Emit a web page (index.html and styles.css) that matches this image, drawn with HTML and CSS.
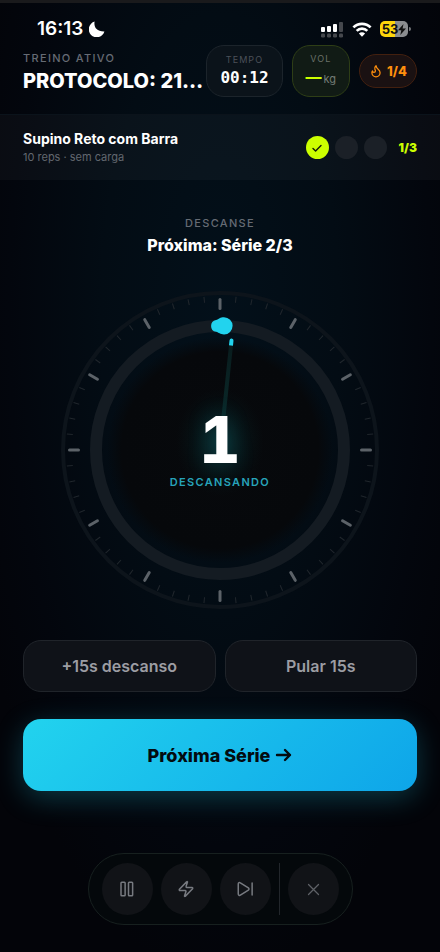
FILE: index.html
```html
<!DOCTYPE html>
<html lang="pt-BR">
<head>
<meta charset="utf-8">
<meta name="viewport" content="width=device-width, initial-scale=1">
<title>Treino ativo</title>
<link rel="stylesheet" href="styles.css">
</head>
<body>
<div class="statusbar">
  <div class="clock">16:13
    <svg width="16" height="16" viewBox="0 0 16 16" aria-hidden="true"><path fill="#fff" d="M5.6.6C4.6 5.8 7.300 10.800 15.400 10.600A8 8 0 1 1 5.600.6Z"/></svg>
  </div>
  <div class="system">
    <svg width="24" height="17" viewBox="0 0 24 17" aria-hidden="true">
      <g fill="#fff"><rect x="1" y="6" width="4" height="5" rx="1"/><rect x="7" y="5" width="4" height="6" rx="1"/><rect x="13" y="3" width="4" height="8" rx="1"/></g>
      <g fill="#45484d"><rect x="19" y="1" width="4" height="10" rx="1"/><rect x="1" y="12.500" width="4" height="4" rx="1.200"/><rect x="7" y="12.500" width="4" height="4" rx="1.200"/><rect x="13" y="12.500" width="4" height="4" rx="1.200"/><rect x="19" y="12.500" width="4" height="4" rx="1.200"/></g>
    </svg>
    <svg width="20" height="15" viewBox="0 0 20 15" aria-hidden="true">
      <g fill="none" stroke="#fff" stroke-width="2.700"><path d="M1.400 5.400a12.200 12.200 0 0 1 17.200 0"/><path d="M4.700 8.900a7.500 7.500 0 0 1 10.600 0"/></g>
      <path fill="#fff" d="M10 14.700 6.900 11.600a4.400 4.400 0 0 1 6.200 0Z"/>
    </svg>
    <div class="battery"><span>53</span>
      <svg width="8" height="11" viewBox="0 0 8 11" aria-hidden="true"><path fill="#111" d="M5.500 0 0 6.300h3.300L2.300 11 8 4.500H4.600Z"/></svg>
    </div>
  </div>
</div>

<header class="header">
  <div class="heading">
    <p class="caption">TREINO ATIVO</p>
    <h1>PROTOCOLO: 21…</h1>
  </div>
  <div class="stats">
    <div class="stat">
      <span class="stat-label">TEMPO</span>
      <span class="time">00:12</span>
    </div>
    <div class="stat stat-volume">
      <span class="stat-label">VOL</span>
      <span class="volume"><b>—</b><small>kg</small></span>
    </div>
    <div class="streak">
      <svg width="14" height="14" viewBox="0 0 24 24" fill="none" stroke="currentColor" stroke-width="2.200" stroke-linecap="round" stroke-linejoin="round" aria-hidden="true"><path d="M8.500 14.500A2.500 2.500 0 0 0 11 12c0-1.380-.5-2-1-3-1.072-2.143-.224-4.054 2-6 .5 2.500 2 4.900 4 6.500 2 1.600 3 3.500 3 5.500a7 7 0 1 1-14 0c0-1.153.433-2.294 1-3a2.500 2.500 0 0 0 2.500 2.500z"/></svg>
      1/4
    </div>
  </div>
</header>

<section class="exercise">
  <div>
    <h2>Supino Reto com Barra</h2>
    <p>10 reps · sem carga</p>
  </div>
  <div class="sets">
    <span class="set set-done"><svg width="12" height="12" viewBox="0 0 12 12" fill="none" stroke="#111c08" stroke-width="1.400" stroke-linecap="round" stroke-linejoin="round" aria-hidden="true"><path d="M2 6.500 4.600 9 10 3.500"/></svg></span>
    <span class="set"></span>
    <span class="set"></span>
    <span class="set-count">1/3</span>
  </div>
</section>

<main class="rest">
  <p class="caption">DESCANSE</p>
  <h2 class="next">Próxima: Série 2/3</h2>

  <div class="timer">
    <svg class="dial" viewBox="0 0 320 320" aria-hidden="true">
      <defs>
        <radialGradient id="core"><stop offset="0" stop-color="#07090c"/><stop offset=".87" stop-color="#06080b"/><stop offset="1" stop-color="#06080b" stop-opacity="0"/></radialGradient>
        <radialGradient id="glow"><stop offset="0" stop-color="#0a3a3c" stop-opacity=".8"/><stop offset=".5" stop-color="#08282a" stop-opacity=".4"/><stop offset="1" stop-color="#06191b" stop-opacity="0"/></radialGradient>
        <linearGradient id="sweep" x1="0" y1="0" x2="0" y2="1"><stop offset="0" stop-color="#091c1d"/><stop offset="1" stop-color="#0a2c2d"/></linearGradient>
        <path id="tick" d="M160 9.500v9"/>
      </defs>
      <circle cx="160" cy="160" r="157" fill="none" stroke="#0d141b" stroke-width="4"/>
      <circle cx="160" cy="160" r="151" fill="none" stroke="#20262c" stroke-width="6" pathLength="360" stroke-dasharray="0 5.800 .4 5.600 .4 5.600 .4 5.600 .4 5.800"/>
      <g stroke="#5c6268" stroke-width="3" stroke-linecap="round">
        <use href="#tick"/><use href="#tick" transform="rotate(30 160 160)"/><use href="#tick" transform="rotate(60 160 160)"/><use href="#tick" transform="rotate(90 160 160)"/><use href="#tick" transform="rotate(120 160 160)"/><use href="#tick" transform="rotate(150 160 160)"/><use href="#tick" transform="rotate(180 160 160)"/><use href="#tick" transform="rotate(210 160 160)"/><use href="#tick" transform="rotate(240 160 160)"/><use href="#tick" transform="rotate(270 160 160)"/><use href="#tick" transform="rotate(300 160 160)"/><use href="#tick" transform="rotate(330 160 160)"/>
      </g>
      <circle cx="160" cy="160" r="124" fill="none" stroke="#141b22" stroke-width="12"/>
      <circle cx="160" cy="160" r="113" fill="url(#core)"/>
      <ellipse cx="160" cy="152" rx="44" ry="54" fill="url(#glow)"/>
      <g transform="rotate(6 160 160)">
        <rect x="158" y="52" width="4" height="98" fill="url(#sweep)"/>
        <path fill="#22d3ee" d="M158 55v-5q0-2 2-2t2 2v5Z"/>
      </g>
      <path fill="#22d3ee" d="M156 30c3-1 4-2.800 8-2.800a8.600 8.600 0 0 1 0 17.200c-4 0-5-1.800-8-2.600a6 6 0 0 1 0-11.800Z"/>
    </svg>
    <div class="readout">
      <strong>1</strong>
      <span>DESCANSANDO</span>
    </div>
  </div>

  <div class="adjust">
    <button type="button">+15s descanso</button>
    <button type="button">Pular 15s</button>
  </div>
  <button class="primary" type="button">Próxima Série
    <svg width="17" height="16" viewBox="0 0 17 16" fill="none" stroke="currentColor" stroke-width="2.400" stroke-linecap="round" stroke-linejoin="round" aria-hidden="true"><path d="M2 8h13M10 3l5 5-5 5"/></svg>
  </button>
</main>

<nav class="dock" aria-label="Controles">
  <button type="button" aria-label="Pausar"><svg viewBox="0 0 24 24" aria-hidden="true"><rect x="4" y="3" width="5.500" height="18" rx="1"/><rect x="14" y="3" width="5.500" height="18" rx="1"/></svg></button>
  <button type="button" aria-label="Ação rápida"><svg viewBox="0 0 24 24" aria-hidden="true"><path d="M4 14a1 1 0 0 1-.78-1.630l9.900-10.200a.5.5 0 0 1 .86.460l-1.920 6.020A1 1 0 0 0 13 10h7a1 1 0 0 1 .78 1.630l-9.900 10.200a.5.5 0 0 1-.86-.460l1.920-6.020A1 1 0 0 0 11 14z"/></svg></button>
  <button type="button" aria-label="Avançar"><svg viewBox="0 0 24 24" aria-hidden="true"><path d="M3 5.200v13.600a1.800 1.800 0 0 0 2.800 1.500l10.700-6.800a1.800 1.800 0 0 0 0-3L5.800 3.700A1.800 1.800 0 0 0 3 5.200ZM21.500 4v16"/></svg></button>
  <span class="divider"></span>
  <button class="close" type="button" aria-label="Fechar"><svg viewBox="0 0 24 24" aria-hidden="true"><path d="M4 4 20 20M20 4 4 20"/></svg></button>
</nav>
</body>
</html>
```
FILE: styles.css
```css
* { box-sizing: border-box; }

body {
  margin: 0;
  min-height: 100vh;
  border-top: 3px solid #1a1a1c;
  background: radial-gradient(ellipse 60% 70% at 50% 33%, #03101a 0%, #030c14 45%, #03060d 80%, #030409 100%);
  color: #fff;
  font-family: Inter, "Liberation Sans", sans-serif;
}

h1, h2, p { margin: 0; }

button {
  font: inherit;
  cursor: pointer;
}

.statusbar {
  display: flex;
  justify-content: space-between;
  align-items: center;
  padding: 16px 29px 0 37px;
}

.clock {
  display: flex;
  align-items: center;
  gap: 6px;
  font-size: 19px;
  line-height: 20px;
  font-weight: 600;
}

.system {
  display: flex;
  align-items: center;
  gap: 8px;
}

.battery {
  position: relative;
  display: flex;
  align-items: center;
  justify-content: center;
  width: 28px;
  height: 16px;
  margin-right: 3px;
  border-radius: 5px;
  background: linear-gradient(90deg, #fdd60b 53%, #8b8d90 53%);
  color: #111;
  font-size: 13px;
  font-weight: 700;
}

.battery::after {
  content: "";
  position: absolute;
  left: 29px;
  top: 6px;
  width: 2px;
  height: 4px;
  border-radius: 0 2px 2px 0;
  background: #77797c;
}

.header {
  display: flex;
  align-items: center;
  gap: 3px;
  padding: 6px 23px 17px;
}

.heading {
  flex: 1;
  min-width: 0;
  padding-top: 2px;
}

.caption {
  color: #666b74;
  font-size: 11px;
  line-height: 18px;
  font-weight: 500;
  letter-spacing: .12em;
}

h1 {
  overflow: hidden;
  font-size: 20px;
  line-height: 28px;
  font-weight: 800;
  white-space: nowrap;
}

.stats {
  display: flex;
  align-items: center;
  gap: 9px;
}

.stat {
  display: flex;
  flex-direction: column;
  align-items: center;
  justify-content: center;
  height: 52px;
  padding: 0 13px;
  border: 1px solid #1c242b;
  border-radius: 18px;
  background: #0b131a;
}

.stat-label {
  color: #4b5159;
  font-size: 9px;
  line-height: 14px;
  letter-spacing: .12em;
}

.time {
  font-family: "DejaVu Sans Mono", monospace;
  font-size: 16px;
  line-height: 22px;
  font-weight: 700;
}

.stat-volume {
  border-color: #2e3e16;
  background: #111b15;
}

.stat-volume .stat-label { color: #6a7168; }

.volume {
  display: flex;
  align-items: baseline;
  gap: 2px;
  font-size: 16px;
  line-height: 22px;
}

.volume b {
  color: #ccff00;
  font-weight: 800;
}

.volume small {
  color: #747b76;
  font-size: 11px;
}

.streak {
  display: flex;
  align-items: center;
  gap: 4px;
  height: 34px;
  padding: 0 9px;
  border: 1px solid #43200f;
  border-radius: 17px;
  background: #1a1112;
  color: #ff8f0d;
  font-size: 13px;
  font-weight: 800;
}

.exercise {
  display: flex;
  align-items: center;
  justify-content: space-between;
  min-height: 66px;
  padding: 0 23px;
  border-top: 1px solid #0b131b;
  background: rgba(255, 255, 255, .03);
}

.exercise h2 {
  font-size: 14px;
  line-height: 20px;
  font-weight: 700;
}

.exercise p {
  color: #62676f;
  font-size: 11px;
  line-height: 17px;
}

.sets {
  display: flex;
  align-items: center;
  gap: 6px;
}

.set {
  display: grid;
  place-items: center;
  width: 23px;
  height: 23px;
  border-radius: 50%;
  background: #1b2027;
}

.set-done { background: #ccff00; }

.set-count {
  margin-left: 6px;
  color: #ccff00;
  font-size: 12px;
  font-weight: 900;
}

.rest {
  padding: 34px 23px 0;
  text-align: center;
}

.next {
  margin-top: 2px;
  font-size: 16px;
  line-height: 22px;
  font-weight: 800;
}

.timer {
  display: grid;
  place-items: center;
  margin: 34px auto 30px;
  max-width: 320px;
}

.dial, .readout { grid-area: 1 / 1; }

.dial {
  display: block;
  width: 100%;
}

.readout {
  position: relative;
  display: flex;
  flex-direction: column;
  align-items: center;
}

.readout strong {
  font-size: 64px;
  line-height: 64px;
  font-weight: 800;
  font-variant-numeric: tabular-nums;
  text-shadow: 0 0 24px rgba(34, 211, 238, .15);
}

.readout span {
  color: #27a3ba;
  font-size: 11px;
  line-height: 20px;
  font-weight: 600;
  letter-spacing: .12em;
}

.adjust {
  display: grid;
  grid-template-columns: 1fr 1fr;
  gap: 9px;
}

.adjust button {
  height: 52px;
  border: 1px solid #20242a;
  border-radius: 18px;
  background: #0f1218;
  color: #9c9da3;
  font-size: 16px;
  font-weight: 600;
}

.primary {
  display: flex;
  align-items: center;
  justify-content: center;
  gap: 5px;
  width: 100%;
  height: 72px;
  margin-top: 27px;
  border: 0;
  border-radius: 18px;
  background: linear-gradient(135deg, #22d3ee, #0ea5e9);
  box-shadow: 0 7px 28px rgba(34, 211, 238, .25);
  color: #030b10;
  font-size: 18px;
  font-weight: 800;
}

.dock {
  display: flex;
  align-items: center;
  gap: 8px;
  width: fit-content;
  margin: 62px auto 0;
  padding: 9px 13px;
  border: 1px solid #17201f;
  border-radius: 36px;
  background: #04080b;
}

.dock button {
  display: grid;
  place-items: center;
  width: 51px;
  height: 52px;
  padding: 0;
  border: 0;
  border-radius: 50%;
  background: #111317;
  color: #777a80;
}

.dock svg {
  width: 18px;
  height: 18px;
  fill: none;
  stroke: currentColor;
  stroke-width: 2;
  stroke-linecap: round;
  stroke-linejoin: round;
}

.dock .close { color: #5e6166; }

.dock .close svg {
  width: 15px;
  height: 15px;
}

.divider {
  width: 1px;
  height: 52px;
  background: #22262b;
}
```
